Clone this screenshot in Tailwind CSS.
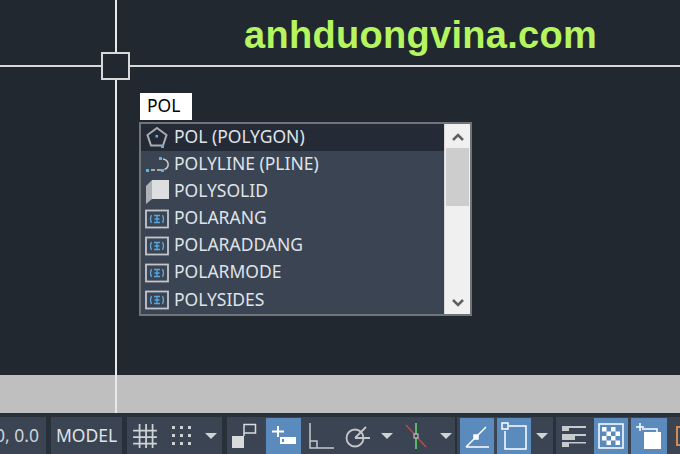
<!DOCTYPE html>
<html lang="en">
<head>
    <meta charset="UTF-8">
    <title>POL command</title>
    <script src="https://cdn.jsdelivr.net/npm/@tailwindcss/browser@4"></script>
</head>
<body class="w-[680px] h-[454px] overflow-hidden bg-[#212830] font-['Noto_Sans',sans-serif]">
    <div class="relative w-[680px] h-[454px] flex flex-col overflow-hidden">
        <!-- Drawing area -->
        <div class="relative h-[375px] shrink-0">
            <div class="absolute left-[244px] top-[12px] text-[38px] leading-[46px] tracking-[0.3px] font-bold font-['Liberation_Sans',sans-serif] text-[#b5f55f] whitespace-nowrap">anhduongvina.com</div>

            <!-- Command input -->
            <div class="absolute left-[140px] top-[93px] w-[52px] h-[27px] bg-white text-black text-[17.500px] leading-[24px] pl-[7px]">POL</div>

            <!-- Autocomplete list -->
            <div class="absolute left-[139px] top-[122px] w-[333px] h-[194px] border-2 border-[#6f7479] flex bg-[#3b4452] box-border">
                <div class="flex-1 flex flex-col text-[17.500px] text-[#dfe3e8]">
                    <div class="h-[27px] bg-[#252b36] flex items-center gap-[5px] pl-[4px]">
                        <svg class="w-[24px] h-[24px]" viewBox="0 0 24 24" fill="none"><path d="M12 3 21.500 10 18 20.500H6L2.500 10Z" stroke="#a9adb1" stroke-width="2"/><rect x="10.500" y="10" width="2.500" height="2.500" fill="#58b4ea"/><rect x="16" y="20" width="3" height="3" fill="#58b4ea"/></svg>
                        <span class="leading-none -mt-[2px]">POL (POLYGON)</span>
                    </div>
                    <div class="h-[27.500px] flex items-center gap-[5px] pl-[4px]">
                        <svg class="w-[24px] h-[24px]" viewBox="0 0 24 24" fill="none"><path d="M6 18H10M12 18H16" stroke="#c8ccd0" stroke-width="1.500"/><path d="M18 7C24 8 25 15 19.500 17.500" stroke="#c8ccd0" stroke-width="1.500"/><rect x="1" y="17" width="3" height="3" fill="#58b4ea"/><rect x="14" y="5" width="3" height="3" fill="#58b4ea"/><rect x="16" y="17" width="3" height="3" fill="#58b4ea"/></svg>
                        <span class="leading-none -mt-[2px]">POLYLINE (PLINE)</span>
                    </div>
                    <div class="h-[27.500px] flex items-center gap-[5px] pl-[4px]">
                        <svg class="w-[24px] h-[24px]" viewBox="0 0 24 24"><path d="M1 6 7 0V19L1 24Z" fill="#aeb2b6"/><path d="M7 0H24V19H7Z" fill="#dcdedf"/></svg>
                        <span class="leading-none -mt-[2px]">POLYSOLID</span>
                    </div>
                    <div class="h-[27.500px] flex items-center gap-[5px] pl-[4px]">
                        <svg class="w-[24px] h-[24px]" viewBox="0 0 24 24" fill="none"><rect x="1" y="3.500" width="22" height="17" stroke="#c3c7cb" stroke-width="1.800"/><path d="M6.500 8Q4.500 12 6.500 16M17.500 8Q19.500 12 17.500 16M9 8.500H15M12 8.500V15.500M9 15.500H15M9.500 12H14.500" stroke="#58a6dc" stroke-width="1.300"/></svg>
                        <span class="leading-none -mt-[2px]">POLARANG</span>
                    </div>
                    <div class="h-[27.500px] flex items-center gap-[5px] pl-[4px]">
                        <svg class="w-[24px] h-[24px]" viewBox="0 0 24 24" fill="none"><rect x="1" y="3.500" width="22" height="17" stroke="#c3c7cb" stroke-width="1.800"/><path d="M6.500 8Q4.500 12 6.500 16M17.500 8Q19.500 12 17.500 16M9 8.500H15M12 8.500V15.500M9 15.500H15M9.500 12H14.500" stroke="#58a6dc" stroke-width="1.300"/></svg>
                        <span class="leading-none -mt-[2px]">POLARADDANG</span>
                    </div>
                    <div class="h-[27.500px] flex items-center gap-[5px] pl-[4px]">
                        <svg class="w-[24px] h-[24px]" viewBox="0 0 24 24" fill="none"><rect x="1" y="3.500" width="22" height="17" stroke="#c3c7cb" stroke-width="1.800"/><path d="M6.500 8Q4.500 12 6.500 16M17.500 8Q19.500 12 17.500 16M9 8.500H15M12 8.500V15.500M9 15.500H15M9.500 12H14.500" stroke="#58a6dc" stroke-width="1.300"/></svg>
                        <span class="leading-none -mt-[2px]">POLARMODE</span>
                    </div>
                    <div class="h-[27.500px] flex items-center gap-[5px] pl-[4px]">
                        <svg class="w-[24px] h-[24px]" viewBox="0 0 24 24" fill="none"><rect x="1" y="3.500" width="22" height="17" stroke="#c3c7cb" stroke-width="1.800"/><path d="M6.500 8Q4.500 12 6.500 16M17.500 8Q19.500 12 17.500 16M9 8.500H15M12 8.500V15.500M9 15.500H15M9.500 12H14.500" stroke="#58a6dc" stroke-width="1.300"/></svg>
                        <span class="leading-none -mt-[2px]">POLYSIDES</span>
                    </div>
                </div>
                <!-- Scrollbar -->
                <div class="w-[26px] bg-[#f0f0f0] flex flex-col items-center pt-[8px] pb-[6px] border-l border-[#d8d8d8]">
                    <svg class="w-[12px] h-[10px] shrink-0" viewBox="0 0 12 10" fill="none"><path d="M1 8 6 3 11 8" stroke="#606060" stroke-width="2.500"/></svg>
                    <div class="w-[23px] h-[58px] bg-[#cdcdcd] mt-[6px]"></div>
                    <svg class="w-[12px] h-[10px] shrink-0 mt-auto" viewBox="0 0 12 10" fill="none"><path d="M1 2 6 7 11 2" stroke="#606060" stroke-width="2.500"/></svg>
                </div>
            </div>
        </div>

        <!-- Grey command bar -->
        <div class="h-[38px] shrink-0 bg-[#bfbfbf]"></div>

        <!-- Status bar -->
        <div class="flex-1 flex gap-[5px] bg-[#28303a] pt-[4px] text-[#dfe3e8]">
            <div class="w-[46px] shrink-0 bg-[#3b4452] flex items-center justify-end pr-[7px] text-[17.500px] whitespace-nowrap overflow-hidden text-[#cfd3d8]">0, 0.0</div>
            <div class="w-[71px] shrink-0 bg-[#3b4452] flex items-center justify-center text-[17.500px]">MODEL</div>
            <div class="w-[95px] shrink-0 bg-[#3b4452] flex items-center pl-[5px]">
                <svg class="w-[26px] h-[26px]" viewBox="0 0 24 24" fill="none" stroke="#d0d3d6" stroke-width="1.600"><path d="M7 1V23M13 1V23M19 1V23M1 7H23M1 13H23M1 19H23"/></svg>
                <svg class="w-[22px] h-[22px] ml-[13px]" viewBox="0 0 22 22" fill="#d0d3d6"><path d="M1 1h3v3H1zM9 1h3v3H9zM17 1h3v3h-3zM1 9h3v3H1zM9 9h3v3H9zM17 9h3v3h-3zM1 17h3v3H1zM9 17h3v3H9zM17 17h3v3h-3z"/></svg>
                <svg class="w-[12px] h-[8px] ml-[12px]" viewBox="0 0 12 8" fill="#d0d3d6"><path d="M0 1H12L6 7Z"/></svg>
            </div>
            <div class="w-[228px] shrink-0 bg-[#3b4452] flex items-center pl-[4px]">
                <svg class="w-[26px] h-[26px]" viewBox="0 0 26 26" fill="none"><rect x="1" y="13" width="12" height="12" fill="#d8dadc"/><path d="M13 13V1.500H24.500V10H13" stroke="#d8dadc" stroke-width="1.500"/></svg>
                <div class="w-[35px] h-[36px] ml-[9px] bg-[#5b8abc] flex items-center justify-center">
                    <svg class="w-[30px] h-[28px]" viewBox="0 0 30 28" fill="none"><path d="M9 4V15M3 9.500H15" stroke="#fff" stroke-width="2"/><rect x="11" y="15" width="16" height="7" fill="#fff"/><rect x="13" y="17" width="2" height="3" fill="#5b8abc"/></svg>
                </div>
                <svg class="w-[26px] h-[28px] ml-[7px]" viewBox="0 0 26 28" fill="none" stroke="#c4c7ca" stroke-width="1.500"><path d="M2 1V26H26M2 19H9V26"/></svg>
                <svg class="w-[26px] h-[26px] ml-[10px]" viewBox="0 0 26 26" fill="none" stroke="#c4c7ca" stroke-width="1.800"><circle cx="11" cy="15" r="8.500"/><path d="M11 15 22 4M11 15H26"/></svg>
                <svg class="w-[12px] h-[8px] ml-[11px]" viewBox="0 0 12 8" fill="#d0d3d6"><path d="M0 1H12L6 7Z"/></svg>
                <svg class="w-[22px] h-[26px] ml-[12px]" viewBox="0 0 22 26" fill="none"><path d="M1 2 21 24" stroke="#b84a4a" stroke-width="1.500"/><path d="M11 0V26" stroke="#5fc46a" stroke-width="1.800"/><rect x="9" y="11" width="4" height="4" fill="#3b4452" stroke="#d0d3d6" stroke-width="1"/></svg>
                <svg class="w-[12px] h-[8px] ml-[13px]" viewBox="0 0 12 8" fill="#d0d3d6"><path d="M0 1H12L6 7Z"/></svg>
            </div>
            <div class="w-[96px] shrink-0 bg-[#3b4452] flex items-center -ml-[3px] pl-[3px]">
                <div class="w-[34px] h-[36px] bg-[#5b8abc] flex items-center justify-center">
                    <svg class="w-[26px] h-[26px]" viewBox="0 0 26 26" fill="none" stroke="#fff" stroke-width="1.500"><path d="M2 24H25M2 24 22 4"/><rect x="10" y="12" width="4" height="4" fill="#fff"/></svg>
                </div>
                <div class="w-[34px] h-[36px] ml-[3px] bg-[#5b8abc] flex items-center justify-center">
                    <svg class="w-[28px] h-[28px]" viewBox="0 0 28 28" fill="none" stroke="#fff" stroke-width="1.500"><path d="M9 4H26V27H5V9"/><rect x="2" y="1" width="6" height="6"/></svg>
                </div>
                <svg class="w-[12px] h-[8px] ml-[5px]" viewBox="0 0 12 8" fill="#d0d3d6"><path d="M0 1H12L6 7Z"/></svg>
            </div>
            <div class="flex-1 bg-[#3b4452] flex items-center -ml-[2px] pl-[5px] overflow-hidden">
                <svg class="w-[26px] h-[22px] shrink-0" viewBox="0 0 26 22" fill="#c8cbce"><path d="M1 1H25V3H1zM1 3H8V6H1zM1 9H25V11H1zM1 11H14V15H1zM1 17H25V18.500H1zM1 18H8V22H1z"/></svg>
                <div class="w-[34px] h-[36px] ml-[7px] shrink-0 bg-[#5b8abc] flex items-center justify-center">
                    <svg class="w-[26px] h-[26px]" viewBox="0 0 26 26"><rect x="1" y="1" width="24" height="24" fill="none" stroke="#fff" stroke-width="1.500"/><path fill="#fff" d="M4 4h4.500v4.500H4zM13 4h4.500v4.500H13zM8.500 8.500H13V13H8.500zM17.500 8.500H22V13h-4.500zM4 13h4.500v4.500H4zM13 13h4.500v4.500H13zM8.500 17.500H13V22H8.500zM17.500 17.500H22V22h-4.500z"/></svg>
                </div>
                <div class="w-[36px] h-[36px] ml-[3px] shrink-0 bg-[#5b8abc] flex items-center justify-center">
                    <svg class="w-[28px] h-[28px]" viewBox="0 0 28 28" fill="none"><path d="M5 1V9M1 5H9" stroke="#fff" stroke-width="1.500"/><path d="M7 7H22V10" stroke="#fff" stroke-width="1.500"/><rect x="9" y="10" width="17" height="17" fill="#fff"/></svg>
                </div>
                <div class="w-[10px] h-[20px] ml-[9px] shrink-0 border-2 border-[#d98a4a]"></div>
            </div>
        </div>

        <!-- Crosshair -->
        <div class="absolute left-0 top-[65px] w-[680px] h-[2px] bg-[#d6d8da]"></div>
        <div class="absolute left-[114.500px] top-0 w-[2px] h-[413px] bg-[#e6e8ea]"></div>
        <div class="absolute left-[101px] top-[52px] w-[29px] h-[28px] border-2 border-[#d6d8da] bg-[#212830]"></div>
    </div>
</body>
</html>
